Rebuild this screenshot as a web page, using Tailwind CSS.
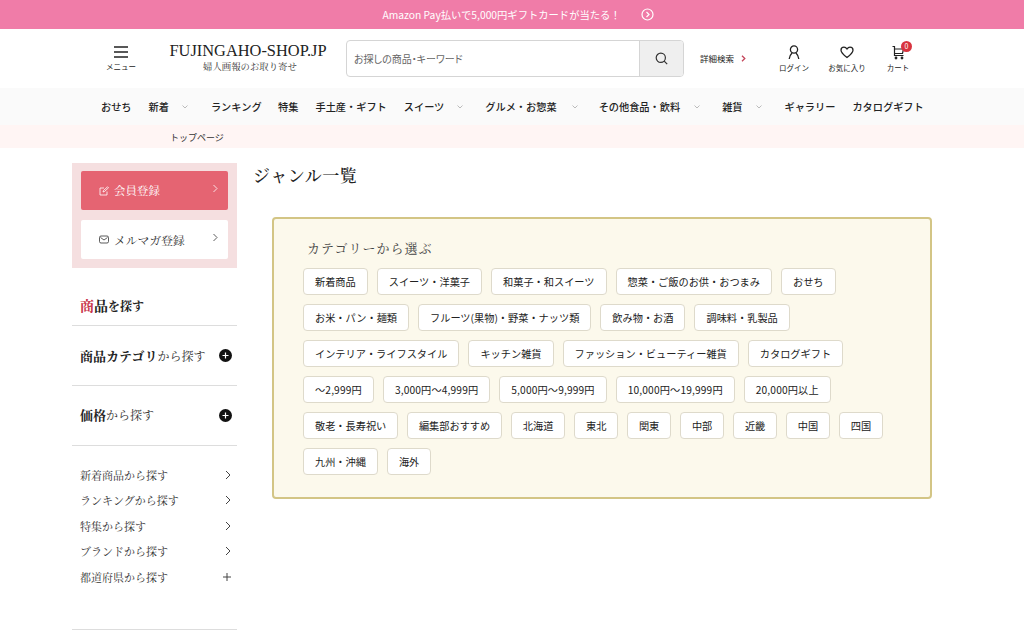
<!DOCTYPE html>
<html lang="ja"><head><meta charset="utf-8"><script src="https://cdn.jsdelivr.net/npm/@tailwindcss/browser@4"></script></head>
<body class="font-['Noto_Sans_CJK_JP','Noto_Sans',sans-serif] text-[#222] bg-white overflow-hidden h-[631px]">
<div class="h-[29px] bg-[#f07ca8] flex items-center justify-center text-white text-[10.3px] pl-[12px]">
<span>Amazon Pay払いで5,000円ギフトカードが当たる！</span>
<svg class="ml-[20px] w-[13px] h-[13px]" viewBox="0 0 13 13" fill="none" stroke="white"><circle cx="6.5" cy="6.5" r="5.5" stroke-width="1.2"/><path d="M5.5 4l2.5 2.5L5.5 9" stroke-width="1.2"/></svg>
</div>
<header class="h-[59px] flex items-center relative">
<div class="w-[98px] ml-[72px] flex-none flex flex-col items-center">
<svg class="w-[16px] h-[14px]" viewBox="0 0 16 14" stroke="#222" stroke-width="1.5"><path d="M1 2h14M1 7h14M1 12h14"/></svg>
<span class="text-[7.5px] mt-[3px] leading-[10px]">メニュー</span>
</div>
<div class="w-[156px] flex-none flex flex-col items-center -mt-[4px]">
<span class="font-['Liberation_Serif',serif] text-[16.4px] leading-[18px] whitespace-nowrap">FUJINGAHO-SHOP.JP</span>
<span class="font-['Noto_Serif_CJK_JP','Noto_Sans_CJK_JP',serif] text-[9.4px] leading-[12px] text-[#333] pl-[4px]">婦人画報のお取り寄せ</span>
</div>
<div class="ml-[20px] w-[338px] h-[37px] flex-none flex border border-[#d5d5d5] rounded-[4px] overflow-hidden">
<div class="flex-1 flex items-center pl-[7px] text-[10px] text-[#666] [font-feature-settings:'palt']">お探しの商品・キーワード</div>
<div class="w-[44px] bg-[#efefef] border-l border-[#d5d5d5] flex items-center justify-center">
<svg class="w-[13px] h-[13px]" viewBox="0 0 13 13" fill="none" stroke="#333" stroke-width="1.2"><circle cx="5.8" cy="5.8" r="4.6"/><path d="M9.2 9.2l3 3"/></svg>
</div></div>
<div class="ml-[16px] flex items-center text-[8.5px] w-[72px] flex-none">詳細検索<svg class="ml-[7px] w-[5px] h-[7px]" viewBox="0 0 5 7" fill="none" stroke="#c4455a" stroke-width="1.3"><path d="M1 .8l2.800 2.700L1 6.200"/></svg></div>
<div class="w-[44px] flex-none flex flex-col items-center">
<svg class="w-[14px] h-[15px]" viewBox="0 0 14 15" fill="none" stroke="#222" stroke-width="1.3"><circle cx="7" cy="4.500" r="3.600"/><path d="M2.200 14C2.500 11 4 9 5 8M11.800 14C11.500 11 10 9 9 8"/></svg>
<span class="text-[7.5px] mt-[2px] leading-[11px] whitespace-nowrap">ログイン</span></div>
<div class="ml-[9px] w-[44px] flex-none flex flex-col items-center">
<svg class="w-[14px] h-[15px]" viewBox="0 0 14 15" fill="none" stroke="#222" stroke-width="1.3"><path d="M7 12.500C3 9.500 1 7.500 1 5.300 1 3.400 2.400 2.200 4 2.200c1.300 0 2.300.7 3 1.800.7-1.100 1.700-1.800 3-1.800 1.600 0 3 1.200 3 3.100 0 2.200-2 4.200-6 7.200z"/></svg>
<span class="text-[7.5px] mt-[2px] leading-[11px] whitespace-nowrap">お気に入り</span></div>
<div class="ml-[7px] w-[44px] flex-none flex flex-col items-center relative">
<svg class="w-[15px] h-[15px]" viewBox="0 0 15 15" fill="none" stroke="#222" stroke-width="1.2"><path d="M1.500 1.500h2v9h9"/><path d="M3.500 4h9l-1 4.500h-8"/><circle cx="5" cy="13" r=".8" fill="#222"/><circle cx="11" cy="13" r=".8" fill="#222"/></svg>
<span class="text-[7.5px] mt-[2px] leading-[11px]">カート</span>
<span class="absolute left-[25px] top-[-4px] w-[11px] h-[11px] rounded-full bg-[#d8343f] text-white text-[7px] leading-[11px] text-center">0</span></div>
</header>
<nav class="h-[37px] bg-[#fafafa] text-[10.2px] font-medium whitespace-nowrap flex items-center pl-[101px] leading-[14px]">
<span>おせち</span><span class="ml-[17px]">新着</span>
<svg class="ml-[13px] w-[6px] h-[4px]" viewBox="0 0 6 4" fill="none" stroke="#bbb"><path d="M.5.500L3 3 5.500.5"/></svg>
<span class="ml-[23px]">ランキング</span><span class="ml-[16.5px]">特集</span><span class="ml-[17px]">手土産・ギフト</span><span class="ml-[17px]">スイーツ</span>
<svg class="ml-[13px] w-[6px] h-[4px]" viewBox="0 0 6 4" fill="none" stroke="#bbb"><path d="M.5.500L3 3 5.500.5"/></svg>
<span class="ml-[22px]">グルメ・お惣菜</span>
<svg class="ml-[15px] w-[6px] h-[4px]" viewBox="0 0 6 4" fill="none" stroke="#bbb"><path d="M.5.500L3 3 5.500.5"/></svg>
<span class="ml-[21px]">その他食品・飲料</span>
<svg class="ml-[14px] w-[6px] h-[4px]" viewBox="0 0 6 4" fill="none" stroke="#bbb"><path d="M.5.500L3 3 5.500.5"/></svg>
<span class="ml-[22px]">雑貨</span>
<svg class="ml-[13px] w-[6px] h-[4px]" viewBox="0 0 6 4" fill="none" stroke="#bbb"><path d="M.5.500L3 3 5.500.5"/></svg>
<span class="ml-[23px]">ギャラリー</span><span class="ml-[17px]">カタログギフト</span>
</nav>
<div class="h-[23px] bg-[#fff5f4] pl-[170px] text-[9px] leading-[25px] text-[#333]">トップページ</div>
<div class="flex pl-[72px]">
<aside class="w-[165px] flex-none pt-[15px] font-['Noto_Serif_CJK_JP','Noto_Sans_CJK_JP',serif]">
<div class="h-[105px] bg-[#f5dfe0] px-[9px] pt-[8px] flex flex-col gap-[10px]">
<div class="h-[39px] rounded-[2px] bg-[#e56472] text-white text-[11.5px] flex items-center pl-[18px] relative">
<svg class="w-[10px] h-[10px] mr-[5px]" viewBox="0 0 10 10" fill="none" stroke="#fff" stroke-width=".8"><path d="M8 5.500V9H1V2h4M4 6l.5-1.500L8.500 .8l1 1L5.500 5.500z"/></svg>会員登録
<svg class="absolute right-[10px] top-[13px] w-[5px] h-[9px]" viewBox="0 0 5 9" fill="none" stroke="#fff" stroke-width=".8"><path d="M.5 1l3.500 3.500L.5 8"/></svg></div>
<div class="h-[39px] rounded-[2px] bg-white text-[#333] text-[11.8px] flex items-center pl-[18px] relative">
<svg class="w-[10px] h-[9px] mr-[5px]" viewBox="0 0 10 9" fill="none" stroke="#333" stroke-width=".8"><rect x=".5" y="1" width="9" height="7" rx="1.500"/><path d="M1.500 2.500L5 5l3.500-2.500"/></svg>メルマガ登録
<svg class="absolute right-[10px] top-[13px] w-[5px] h-[9px]" viewBox="0 0 5 9" fill="none" stroke="#333" stroke-width=".8"><path d="M.5 1l3.500 3.500L.5 8"/></svg></div>
</div>
<div class="mt-[25px] h-[33px] border-b border-[#ddd] pl-[8px] text-[12px] font-bold leading-[24px]"><span class="text-[14px] text-[#c8354a]">商</span><span class="text-[14px]">品</span>を探す</div>
<div class="h-[60px] border-b border-[#ddd] pl-[8px] pr-[5px] flex items-center justify-between"><span class="whitespace-nowrap text-[12px] text-[#333]"><b class="text-[13px] text-[#222]">商品カテゴリ</b>から探す</span>
<svg class="w-[13px] h-[13px] flex-none" viewBox="0 0 13 13"><circle cx="6.500" cy="6.500" r="6.500" fill="#111"/><path d="M3.500 6.500h6M6.500 3.500v6" stroke="#fff" stroke-width="1.200"/></svg></div>
<div class="h-[60px] border-b border-[#ddd] pl-[8px] pr-[5px] flex items-center justify-between"><span class="whitespace-nowrap text-[12px] text-[#333] -mt-[2px]"><b class="text-[13px] text-[#222]">価格</b>から探す</span>
<svg class="w-[13px] h-[13px] flex-none" viewBox="0 0 13 13"><circle cx="6.500" cy="6.500" r="6.500" fill="#111"/><path d="M3.500 6.500h6M6.500 3.500v6" stroke="#fff" stroke-width="1.200"/></svg></div>
<ul class="pt-[16px] h-[184px] border-b border-[#ddd] pl-[8px] pr-[6px] text-[11px] text-[#333]">
<li class="h-[25.500px] flex items-center justify-between"><span>新着商品から探す</span><svg class="w-[6px] h-[10px]" viewBox="0 0 6 10" fill="none" stroke="#444"><path d="M1 1l4 4-4 4"/></svg></li>
<li class="h-[25.500px] flex items-center justify-between"><span>ランキングから探す</span><svg class="w-[6px] h-[10px]" viewBox="0 0 6 10" fill="none" stroke="#444"><path d="M1 1l4 4-4 4"/></svg></li>
<li class="h-[25.500px] flex items-center justify-between"><span>特集から探す</span><svg class="w-[6px] h-[10px]" viewBox="0 0 6 10" fill="none" stroke="#444"><path d="M1 1l4 4-4 4"/></svg></li>
<li class="h-[25.500px] flex items-center justify-between"><span>ブランドから探す</span><svg class="w-[6px] h-[10px]" viewBox="0 0 6 10" fill="none" stroke="#444"><path d="M1 1l4 4-4 4"/></svg></li>
<li class="h-[25.500px] flex items-center justify-between"><span>都道府県から探す</span><svg class="w-[8px] h-[8px]" viewBox="0 0 8 8" fill="none" stroke="#444"><path d="M0 4h8M4 0v8"/></svg></li>
</ul>
</aside>
<main class="ml-[16px] flex-1">
<h1 class="font-['Noto_Serif_CJK_JP','Noto_Sans_CJK_JP',serif] text-[17px] leading-[24px] mt-[15px] tracking-[0.5px] font-medium">ジャンル一覧</h1>
<section class="mt-[30px] ml-[19px] w-[660px] h-[282px] bg-[#fcf9ec] border-2 border-[#d3c585] rounded-[4px] pl-[29px] pr-[20px] pt-[19px]">
<h2 class="font-['Noto_Serif_CJK_JP','Noto_Sans_CJK_JP',serif] text-[13px] leading-[20px] pl-[4px] tracking-[1px] text-[#444] mb-[10px]">カテゴリーから選ぶ</h2>
<div class="flex flex-col gap-[9px] text-[10.2px] leading-[25px] text-[#222]">
<div class="flex gap-[9px]">
<a class="bg-white border border-[#dedacb] rounded-[4px] px-[11px] h-[27px] whitespace-nowrap">新着商品</a>
<a class="bg-white border border-[#dedacb] rounded-[4px] px-[11px] h-[27px] whitespace-nowrap">スイーツ・洋菓子</a>
<a class="bg-white border border-[#dedacb] rounded-[4px] px-[11px] h-[27px] whitespace-nowrap">和菓子・和スイーツ</a>
<a class="bg-white border border-[#dedacb] rounded-[4px] px-[11px] h-[27px] whitespace-nowrap">惣菜・ご飯のお供・おつまみ</a>
<a class="bg-white border border-[#dedacb] rounded-[4px] px-[11px] h-[27px] whitespace-nowrap">おせち</a>
</div>
<div class="flex gap-[9px]">
<a class="bg-white border border-[#dedacb] rounded-[4px] px-[11px] h-[27px] whitespace-nowrap">お米・パン・麺類</a>
<a class="bg-white border border-[#dedacb] rounded-[4px] px-[11px] h-[27px] whitespace-nowrap">フルーツ(果物)・野菜・ナッツ類</a>
<a class="bg-white border border-[#dedacb] rounded-[4px] px-[11px] h-[27px] whitespace-nowrap">飲み物・お酒</a>
<a class="bg-white border border-[#dedacb] rounded-[4px] px-[11px] h-[27px] whitespace-nowrap">調味料・乳製品</a>
</div>
<div class="flex gap-[9px]">
<a class="bg-white border border-[#dedacb] rounded-[4px] px-[11px] h-[27px] whitespace-nowrap">インテリア・ライフスタイル</a>
<a class="bg-white border border-[#dedacb] rounded-[4px] px-[11px] h-[27px] whitespace-nowrap">キッチン雑貨</a>
<a class="bg-white border border-[#dedacb] rounded-[4px] px-[11px] h-[27px] whitespace-nowrap">ファッション・ビューティー雑貨</a>
<a class="bg-white border border-[#dedacb] rounded-[4px] px-[11px] h-[27px] whitespace-nowrap">カタログギフト</a>
</div>
<div class="flex gap-[9px] tracking-[0.15px]">
<a class="bg-white border border-[#dedacb] rounded-[4px] px-[11px] h-[27px] whitespace-nowrap">〜2,999円</a>
<a class="bg-white border border-[#dedacb] rounded-[4px] px-[11px] h-[27px] whitespace-nowrap">3,000円〜4,999円</a>
<a class="bg-white border border-[#dedacb] rounded-[4px] px-[11px] h-[27px] whitespace-nowrap">5,000円〜9,999円</a>
<a class="bg-white border border-[#dedacb] rounded-[4px] px-[11px] h-[27px] whitespace-nowrap">10,000円〜19,999円</a>
<a class="bg-white border border-[#dedacb] rounded-[4px] px-[11px] h-[27px] whitespace-nowrap">20,000円以上</a>
</div>
<div class="flex gap-[8.6px]">
<a class="bg-white border border-[#dedacb] rounded-[4px] px-[11px] h-[27px] whitespace-nowrap">敬老・長寿祝い</a>
<a class="bg-white border border-[#dedacb] rounded-[4px] px-[11px] h-[27px] whitespace-nowrap">編集部おすすめ</a>
<a class="bg-white border border-[#dedacb] rounded-[4px] px-[11px] h-[27px] whitespace-nowrap">北海道</a>
<a class="bg-white border border-[#dedacb] rounded-[4px] px-[11px] h-[27px] whitespace-nowrap">東北</a>
<a class="bg-white border border-[#dedacb] rounded-[4px] px-[11px] h-[27px] whitespace-nowrap">関東</a>
<a class="bg-white border border-[#dedacb] rounded-[4px] px-[11px] h-[27px] whitespace-nowrap">中部</a>
<a class="bg-white border border-[#dedacb] rounded-[4px] px-[11px] h-[27px] whitespace-nowrap">近畿</a>
<a class="bg-white border border-[#dedacb] rounded-[4px] px-[11px] h-[27px] whitespace-nowrap">中国</a>
<a class="bg-white border border-[#dedacb] rounded-[4px] px-[11px] h-[27px] whitespace-nowrap">四国</a>
</div>
<div class="flex gap-[9px]">
<a class="bg-white border border-[#dedacb] rounded-[4px] px-[11px] h-[27px] whitespace-nowrap">九州・沖縄</a>
<a class="bg-white border border-[#dedacb] rounded-[4px] px-[11px] h-[27px] whitespace-nowrap">海外</a>
</div>
</div>
</section>
</main>
</div>
</body></html>
